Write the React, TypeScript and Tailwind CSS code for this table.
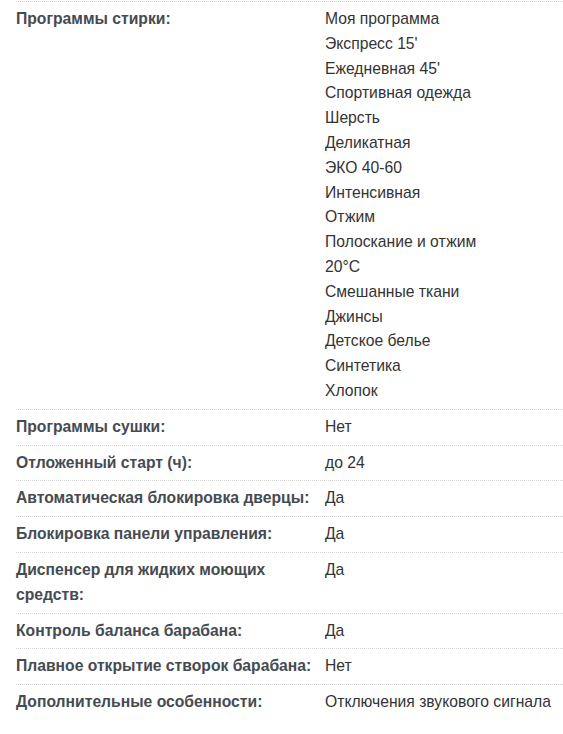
const programs = [
  'Моя программа',
  "Экспресс 15'",
  "Ежедневная 45'",
  'Спортивная одежда',
  'Шерсть',
  'Деликатная',
  'ЭКО 40-60',
  'Интенсивная',
  'Отжим',
  'Полоскание и отжим',
  '20°C',
  'Смешанные ткани',
  'Джинсы',
  'Детское белье',
  'Синтетика',
  'Хлопок',
];

const specs: { label: string; value: string[] }[] = [
  { label: 'Программы стирки:', value: programs },
  { label: 'Программы сушки:', value: ['Нет'] },
  { label: 'Отложенный старт (ч):', value: ['до 24'] },
  { label: 'Автоматическая блокировка дверцы:', value: ['Да'] },
  { label: 'Блокировка панели управления:', value: ['Да'] },
  { label: 'Диспенсер для жидких моющих средств:', value: ['Да'] },
  { label: 'Контроль баланса барабана:', value: ['Да'] },
  { label: 'Плавное открытие створок барабана:', value: ['Нет'] },
  { label: 'Дополнительные особенности:', value: ['Отключения звукового сигнала'] },
];

export default function App() {
  return (
    <div
      className="min-h-[734px] bg-white pl-4 pt-px text-[15.7px] leading-[24.8px]"
      style={{ fontFamily: '"Liberation Sans", Arial, sans-serif' }}
    >
      {specs.map(row => (
        <div
          key={row.label}
          className="grid grid-cols-[309px_1fr] border-t border-dotted border-[#d6d6d6] py-[5px]"
        >
          <div className="pr-3 font-bold text-[#464b52]">{row.label}</div>
          <div className="text-[#333]">
            {row.value.map(v => (
              <div key={v}>{v}</div>
            ))}
          </div>
        </div>
      ))}
    </div>
  );
}
